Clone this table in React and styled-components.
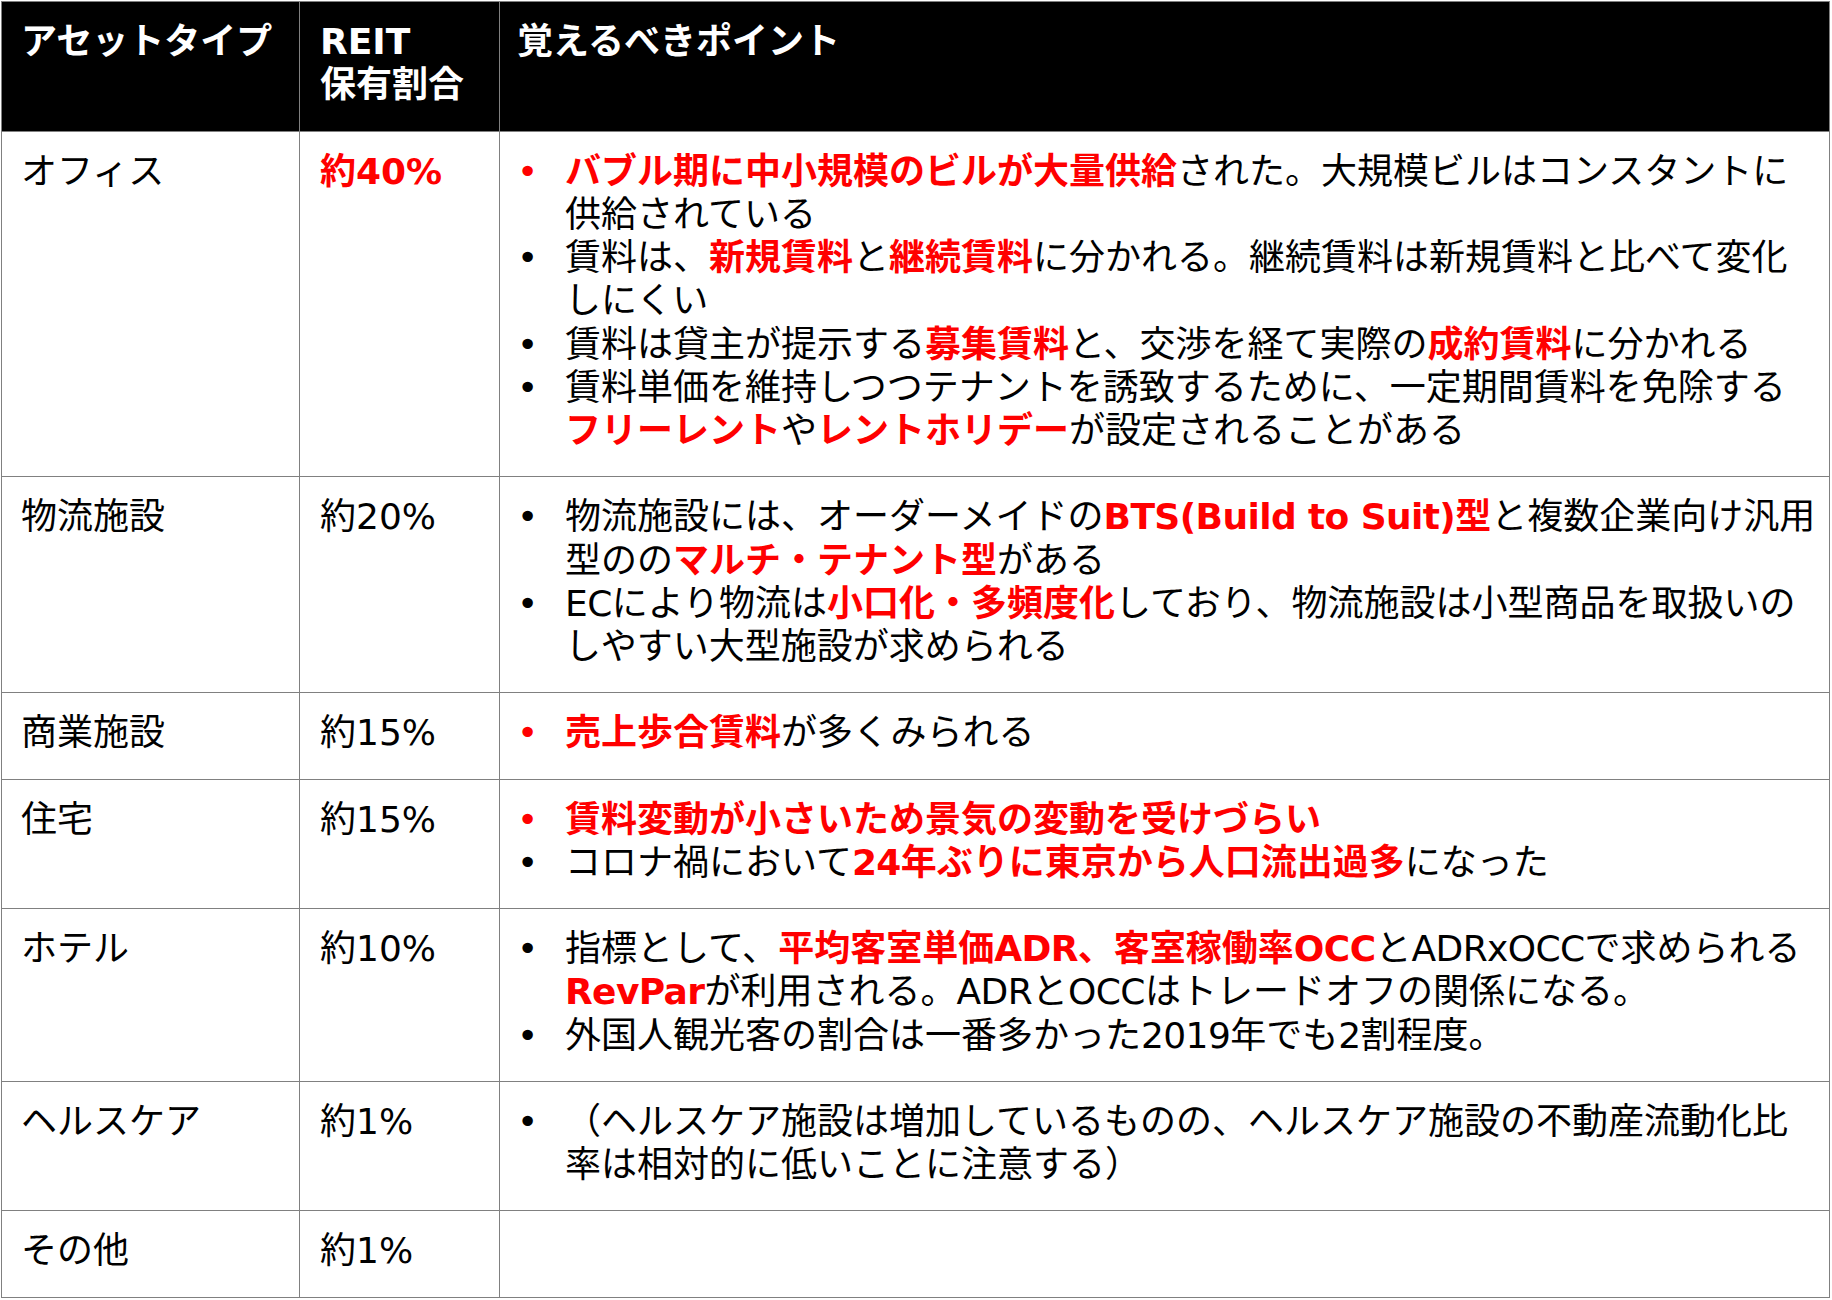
import React from "react";
import styled, { createGlobalStyle } from "styled-components";

const Global = createGlobalStyle`
    html, body {
        margin: 0;
        padding: 0;
        background: #ffffff;
    }
    body {
        font-family: "DejaVu Sans", "Noto Sans CJK JP", sans-serif;
        color: #000000;
    }
`

const Page = styled.div`
    padding: 1px 2px 0 1px;
    width: 1832px;
    box-sizing: border-box;
`

const Tabela = styled.table`
    width: 100%;
    border-collapse: collapse;
    table-layout: fixed;
    font-size: 36px;
    line-height: 43.25px;
`

const Cabecalho = styled.th`
    box-sizing: border-box;
    background: #000000;
    color: #ffffff;
    font-weight: bold;
    text-align: left;
    vertical-align: top;
    border: 1px solid #808080;
    padding: 18px 20px 24px ${props => props.$pad || '20px'};
    width: ${props => props.$width || 'auto'};
`

const Celula = styled.td`
    vertical-align: top;
    border: 1px solid #808080;
    padding: 18px 20px 24px ${props => props.$pad || '20px'};
    white-space: nowrap;
    color: ${props => props.$red ? '#ff0000' : '#000000'};
    font-weight: ${props => props.$bold ? 'bold' : 'normal'};
`

const Item = styled.div`
    display: flex;
`

const Marcador = styled.span`
    flex: 0 0 48px;
    color: ${props => props.$red ? '#ff0000' : '#000000'};
`

const Linhas = styled.div`
    display: flex;
    flex-direction: column;
`

const Destaque = styled.span`
    color: #ff0000;
    font-weight: bold;
`

const Latino = styled.span`
    letter-spacing: -0.6px;
`

const linhas = [
    {
        tipo: 'オフィス', parte: '約40%', forte: true,
        pontos: [
            "**バブル期に中小規模のビルが大量供給**された。大規模ビルはコンスタントに\n供給されている",
            "賃料は、**新規賃料**と**継続賃料**に分かれる。継続賃料は新規賃料と比べて変化\nしにくい",
            "賃料は貸主が提示する**募集賃料**と、交渉を経て実際の**成約賃料**に分かれる",
            "賃料単価を維持しつつテナントを誘致するために、一定期間賃料を免除する\n**フリーレント**や**レントホリデー**が設定されることがある",
        ]
    },
    {
        tipo: '物流施設', parte: '約20%',
        pontos: [
            "物流施設には、オーダーメイドの**BTS(Build to Suit)型**と複数企業向け汎用\n型のの**マルチ・テナント型**がある",
            "ECにより物流は**小口化・多頻度化**しており、物流施設は小型商品を取扱いの\nしやすい大型施設が求められる",
        ]
    },
    {
        tipo: '商業施設', parte: '約15%',
        pontos: ["**売上歩合賃料**が多くみられる"]
    },
    {
        tipo: '住宅', parte: '約15%',
        pontos: [
            "**賃料変動が小さいため景気の変動を受けづらい**",
            "コロナ禍において**24年ぶりに東京から人口流出過多**になった",
        ]
    },
    {
        tipo: 'ホテル', parte: '約10%',
        pontos: [
            "指標として、**平均客室単価ADR、客室稼働率OCC**とADRxOCCで求められる\n**RevPar**が利用される。ADRとOCCはトレードオフの関係になる。",
            "外国人観光客の割合は一番多かった2019年でも2割程度。",
        ]
    },
    {
        tipo: 'ヘルスケア', parte: '約1%',
        pontos: [
            "（ヘルスケア施設は増加しているものの、ヘルスケア施設の不動産流動化比\n率は相対的に低いことに注意する）",
        ]
    },
    {tipo: 'その他', parte: '約1%', pontos: []},
]

// Latin runs get a slightly tighter spacing, closer to the slide font
function Trecho({texto}) {
    const pedacos = texto.split(/([A-Za-z0-9()% ]+)/)
    return pedacos.map((p, i) => i % 2 ? <Latino key={i}>{p}</Latino> : p)
}

function Texto({linha}) {
    const partes = linha.split('**')
    return partes.map((p, i) => i % 2
        ? <Destaque key={i}><Trecho texto={p}/></Destaque>
        : <span key={i}><Trecho texto={p}/></span>)
}

function Ponto({texto}) {
    return (
        <Item>
            <Marcador $red={texto.startsWith('**')}>•</Marcador>
            <Linhas>
                {texto.split('\n').map((l, i) => <div key={i}><Texto linha={l}/></div>)}
            </Linhas>
        </Item>
    )
}

export default function App() {
    return (
        <Page>
            <Global/>
            <Tabela>
                <thead>
                <tr>
                    <Cabecalho $width="298px" $pad="19px">アセットタイプ</Cabecalho>
                    <Cabecalho $width="200px">REIT<br/>保有割合</Cabecalho>
                    <Cabecalho $pad="17px">覚えるべきポイント</Cabecalho>
                </tr>
                </thead>
                <tbody>
                {linhas.map((item, index) => (
                    <tr key={index}>
                        <Celula $pad="19px">{item.tipo}</Celula>
                        <Celula $red={item.forte} $bold={item.forte}>{item.parte}</Celula>
                        <Celula $pad="17px">
                            {item.pontos.map((p, i) => <Ponto key={i} texto={p}/>)}
                        </Celula>
                    </tr>
                ))}
                </tbody>
            </Tabela>
        </Page>
    )
}
